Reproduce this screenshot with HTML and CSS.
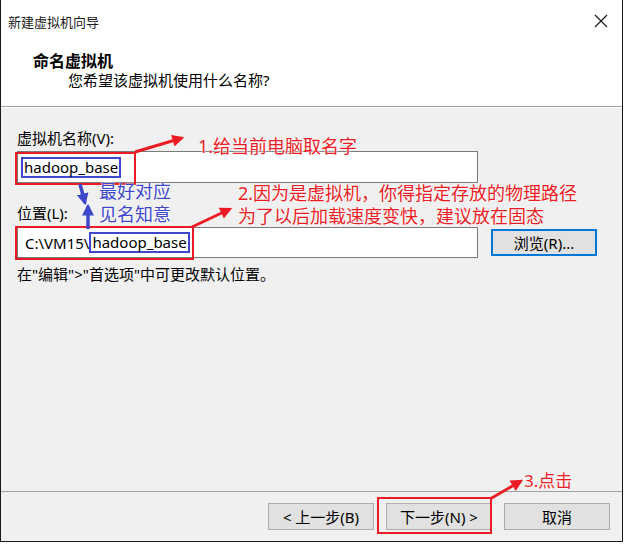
FILE: index.html
```html
<!DOCTYPE html>
<html lang="zh-CN">

<head>
    <meta charset="UTF-8">
    <title>新建虚拟机向导</title>
    <link rel="stylesheet" href="styles.css">
</head>

<body>

    <div class="window">
        <div class="titlebar">
            <span class="title">新建虚拟机向导</span>
            <svg class="close" width="14" height="14" viewBox="0 0 14 14">
                <path d="M1 1 L13 13 M13 1 L1 13" stroke="#1a1a1a" stroke-width="1.2" fill="none" />
            </svg>
        </div>

        <div class="header">
            <h1>命名虚拟机</h1>
            <p class="subtitle">您希望该虚拟机使用什么名称?</p>
        </div>

        <div class="content">
            <div class="label label-name">虚拟机名称(V):</div>
            <div class="field field-name">
                <span class="mark">hadoop_base</span>
            </div>

            <div class="label label-path">位置(L):</div>
            <div class="field-row">
                <div class="field field-path">C:\VM15\<span class="mark">hadoop_base</span></div>
                <button class="btn btn-focus">浏览(R)...</button>
            </div>

            <div class="hint">在"编辑"&gt;"首选项"中可更改默认位置。</div>
        </div>

        <div class="footer">
            <button class="btn">&lt; 上一步(B)</button>
            <button class="btn">下一步(N) &gt;</button>
            <button class="btn">取消</button>
        </div>

        <!-- annotations drawn on top of the dialog -->
        <div class="redbox box-name"></div>
        <div class="redbox box-path"></div>
        <div class="redbox box-next"></div>

        <div class="note note-1">1.给当前电脑取名字</div>
        <div class="note note-2">2.因为是虚拟机，你得指定存放的物理路径<br>为了以后加载速度变快，建议放在固态</div>
        <div class="note note-3">3.点击</div>
        <div class="note-blue">
            <div>最好对应</div>
            <div>见名知意</div>
        </div>

        <svg class="arrows" width="627" height="544" viewBox="0 0 627 544">
            <defs>
                <marker id="headRed" markerUnits="userSpaceOnUse" markerWidth="13" markerHeight="12" viewBox="0 0 10 10" refX="8" refY="5" orient="auto">
                    <path d="M0 0 L10 5 L0 10 z" fill="#ed1c24" />
                </marker>
                <marker id="headBlue" markerUnits="userSpaceOnUse" markerWidth="12" markerHeight="13" viewBox="0 0 10 10" refX="8" refY="5" orient="auto">
                    <path d="M0 0 L10 5 L0 10 z" fill="#3f48cc" />
                </marker>
            </defs>
            <line x1="135" y1="152" x2="182" y2="138" stroke="#ed1c24" stroke-width="3" marker-end="url(#headRed)" />
            <line x1="192" y1="227" x2="230" y2="209" stroke="#ed1c24" stroke-width="3" marker-end="url(#headRed)" />
            <line x1="490" y1="499" x2="521" y2="481" stroke="#ed1c24" stroke-width="3" marker-end="url(#headRed)" />
            <line x1="80" y1="184" x2="85" y2="203" stroke="#3f48cc" stroke-width="3.5" marker-end="url(#headBlue)" />
            <line x1="88" y1="229" x2="88" y2="206" stroke="#3f48cc" stroke-width="3.5" marker-end="url(#headBlue)" />
        </svg>
    </div>

</body>

</html>
```

FILE: styles.css
```css
body {
    margin: 0;
    background-color: #ffffff;
    font-family: "Noto Sans", "Noto Sans CJK SC", sans-serif;
    font-size: 15px;
    color: #000;
}

.window {
    position: relative;
    width: 623px;
    height: 542px;
    box-sizing: border-box;
    border: 1px solid #1a1a1a;
    border-top: none;
    display: flex;
    flex-direction: column;
    background: #f0f0f0;
}

.titlebar {
    height: 42px;
    display: flex;
    align-items: center;
    justify-content: space-between;
    padding: 0 14px 0 7px;
    background: #fff;
}

.title {
    font-size: 13px;
    color: #1a1a1a;
}

.header {
    height: 65px;
    box-sizing: border-box;
    padding: 9px 0 0 32px;
    background: #fff;
    border-bottom: 1px solid #a0a0a0;
}

h1 {
    margin: 0;
    font-size: 16px;
    font-weight: bold;
    line-height: 20px;
}

.subtitle {
    margin: 0 0 0 35px;
    line-height: 19px;
}

.content {
    flex: 1;
    padding: 0 0 0 16px;
    border-top: 1px solid #fff;
}

.label {
    line-height: 20px;
}

.label-name {
    margin-top: 20px;
}

.label-path {
    margin-top: 20px;
}

.field {
    width: 461px;
    height: 32px;
    box-sizing: border-box;
    border: 1px solid #7a7a7a;
    background: #fff;
    padding-left: 7px;
    display: flex;
    align-items: center;
    white-space: nowrap;
}

.field-name {
    margin-top: 3px;
}

.field-name .mark {
    margin-left: -4px;
}

.field-row {
    margin-top: 4px;
    display: flex;
    align-items: center;
    gap: 13px;
}

.field-path {
    height: 31px;
}

.mark {
    border: 2px solid #3f48cc;
    padding: 0 1px;
    line-height: 17px;
}

.btn {
    width: 106px;
    height: 27px;
    box-sizing: border-box;
    border: 1px solid #adadad;
    background: #e1e1e1;
    font-family: inherit;
    font-size: 15px;
    color: #000;
    padding: 0;
}

.btn-focus {
    border: 2px solid #0078d7;
}

.hint {
    margin-top: 6px;
    line-height: 20px;
}

.footer {
    height: 50px;
    box-sizing: border-box;
    border-top: 1px solid #a0a0a0;
    padding: 11px 12px 0 0;
    display: flex;
    justify-content: flex-end;
    gap: 12px;
}

/* annotations */
.redbox {
    position: absolute;
    border: 2px solid #ed1c24;
    box-sizing: border-box;
}

.box-name {
    left: 14px;
    top: 152px;
    width: 121px;
    height: 33px;
}

.box-path {
    left: 14px;
    top: 226px;
    width: 179px;
    height: 34px;
}

.box-next {
    left: 376px;
    top: 497px;
    width: 115px;
    height: 37px;
}

.note {
    position: absolute;
    color: #ed1c24;
    font-size: 18px;
    line-height: 23px;
    white-space: nowrap;
    text-shadow: 0 0 2px #fff, 0 0 2px #fff;
}

.note-1 {
    left: 197px;
    top: 135px;
}

.note-2 {
    left: 237px;
    top: 182px;
}

.note-3 {
    left: 523px;
    top: 469px;
    font-size: 17px;
}

.note-blue {
    position: absolute;
    left: 98px;
    top: 180px;
    color: #3f48cc;
    font-size: 18px;
    line-height: 23px;
    text-shadow: 0 0 2px #fff, 0 0 2px #fff;
}

.arrows {
    position: absolute;
    left: -1px;
    top: 0;
    pointer-events: none;
}
```
